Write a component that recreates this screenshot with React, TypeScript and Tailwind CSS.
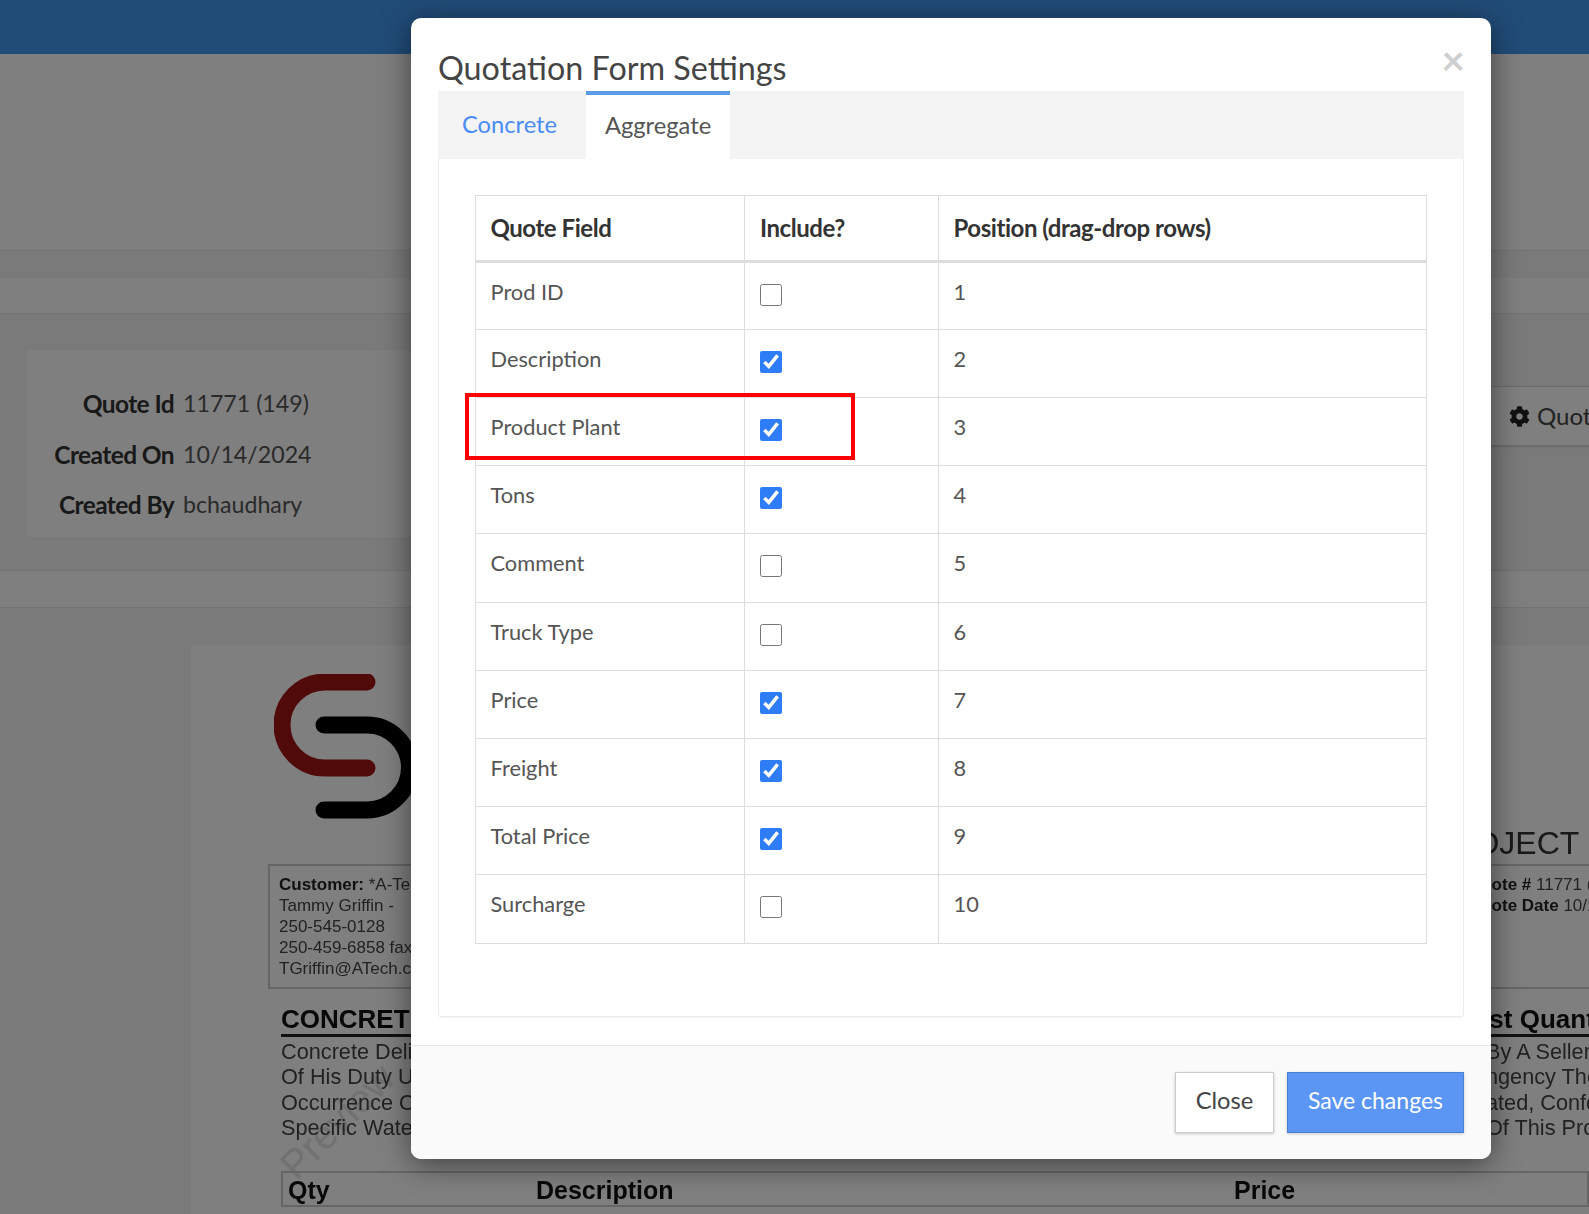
import { FaCog } from 'react-icons/fa';

const FIELDS = [
  { name: 'Prod ID', on: false },
  { name: 'Description', on: true },
  { name: 'Product Plant', on: true },
  { name: 'Tons', on: true },
  { name: 'Comment', on: false },
  { name: 'Truck Type', on: false },
  { name: 'Price', on: true },
  { name: 'Freight', on: true },
  { name: 'Total Price', on: true },
  { name: 'Surcharge', on: false },
];

const META = [
  { label: 'Quote Id', value: '11771 (149)' },
  { label: 'Created On', value: '10/14/2024' },
  { label: 'Created By', value: 'bchaudhary' },
];

function Backdrop() {
  return (
    <div className="min-h-full bg-[#f4f4f4] font-['Lato',sans-serif] text-[#333]">
      <div className="h-[54px] bg-[#4298f0]" />
      <div className="h-[197px] bg-white border-b border-[#e6e6e6]" />
      <div className="h-[27px]" />
      <div className="h-[36px] bg-white border-b border-[#e6e6e6]" />

      {/* Quote info */}
      <div className="h-[256px] pt-[36px] pl-[27px] flex justify-between">
        <div className="w-[500px] h-[187px] bg-white pt-[30px] flex flex-col gap-[3px]">
          {META.map(m => (
            <div key={m.label} className="flex h-[47.5px] leading-[47px]">
              <div className="w-[147px] text-right text-[24.5px] font-bold tracking-[-0.6px]">{m.label}</div>
              <div className="ml-[9px] text-[23.2px] text-[#555]">{m.value}</div>
            </div>
          ))}
        </div>
        <div className="shrink-0 mt-[36px] mr-[-80px] h-[60px] pl-[20px] w-[180px] bg-white border-y border-[#d8d8d8] shadow flex items-center gap-[7px] text-[24px] text-[#444]">
          <FaCog size={21} className="text-[#222]" />
          Quote
        </div>
      </div>
      <div className="h-[38px] bg-white border-y border-[#e6e6e6]" />

      {/* Quote document preview */}
      <div className="ml-[191px] mt-[37px] h-[600px] bg-white relative blur-[0.6px] font-['Liberation_Sans',sans-serif] overflow-hidden">
        <div className="absolute left-[75px] top-[446px] -rotate-45 text-[40px] text-[#e2e2e2]">Preview</div>
        <div className="relative flex justify-between">
          <div className="pl-[77px] w-[500px]">
            <svg width="160" height="146" viewBox="0 0 160 146" className="mt-[29px] ml-[6px]">
              <path d="M93 8H51a43 43 0 0 0 0 86H93" fill="none" stroke="#a01414" strokeWidth="17" strokeLinecap="round" />
              <path d="M50 51H93a42.5 42.5 0 0 1 0 85H50" fill="none" stroke="#000" strokeWidth="17" strokeLinecap="round" />
            </svg>
            <div className="mt-[44px] h-[125px] border-2 border-[#ccc] px-[9px] pt-[8px] text-[17px] leading-[21px] text-[#444] whitespace-nowrap">
              <div><b className="text-[#222]">Customer:</b> *A-Tech</div>
              <div>Tammy Griffin -</div>
              <div>250-545-0128</div>
              <div>250-459-6858 fax</div>
              <div>TGriffin@ATech.com</div>
            </div>
          </div>
          <div className="w-[125px] h-[344px] pt-[180px] shrink-0 whitespace-nowrap border-b-2 border-[#ccc]">
            <div className="text-[32px] leading-[36px] text-[#333] h-[41px] border-b-2 border-[#ccc] -ml-[34px]">PROJECT</div>
            <div className="text-[17px] leading-[21px] text-[#444] mt-[8px] ml-[4px] -mr-[40px]">
              <div><b className="text-[#222]">Quote #</b> 11771 (149)</div>
              <div><b className="text-[#222]">Quote Date</b> 10/14/2024</div>
            </div>
          </div>
        </div>

        <div className="relative ml-[90px] mt-[11px] whitespace-nowrap">
          <div className="flex justify-between h-[37px] border-b-[3px] border-[#222] text-[26px] font-bold leading-[38px] text-[#111]">
            <span>CONCRETE</span>
            <span className="w-[117px] shrink-0">Est Quantity</span>
          </div>
          <div className="flex justify-between text-[21.7px] leading-[25.3px] text-[#444] pt-[2px]">
            <div>
              <div>Concrete Delivered</div>
              <div>Of His Duty Under</div>
              <div>Occurrence Of</div>
              <div>Specific Water</div>
            </div>
            <div className="w-[117px] shrink-0 pl-[14px]">
              <div>By A Seller</div>
              <div>ngency The</div>
              <div>ated, Conform</div>
              <div>Of This Project</div>
            </div>
          </div>
          <div className="mt-[31px] h-[36px] border-2 border-[#ccc] flex text-[25px] font-bold leading-[34px] text-[#111]">
            <span className="w-[253px] pl-[5px]">Qty</span>
            <span className="w-[698px]">Description</span>
            <span>Price</span>
          </div>
        </div>
      </div>
    </div>
  );
}

export default function App() {
  return (
    <div className="relative h-screen overflow-hidden">
      <Backdrop />
      <div className="absolute inset-0 bg-black/50" />

      {/* Modal */}
      <div className="absolute left-[411px] top-[18px] w-[1080px] h-[1141px] bg-white rounded-[10px] shadow-[0_5px_30px_rgba(0,0,0,0.5)] font-['Lato',sans-serif] text-[#555] flex flex-col">
        <div className="relative h-[73px] px-[27px] pt-[27px]">
          <h4 className="text-[32.3px] leading-[45px] font-normal text-[#444] whitespace-nowrap">Quotation Form Settings</h4>
          <span className="absolute right-[26px] top-[17px] text-[41px] leading-[50px] font-bold text-[#cfcfcf]">×</span>
        </div>

        <div className="px-[27px] flex-1">
          {/* Tabs */}
          <div className="h-[68px] bg-[#f4f4f4] flex text-[23.7px]">
            <div className="w-[148px] pl-[24px] pt-[17px] leading-[32px] text-[#4a8cf5]">Concrete</div>
            <div className="w-[144px] bg-white border-t-[4px] border-[#5b9bea] pl-[19px] pt-[14px] leading-[32px] text-[#555]">Aggregate</div>
          </div>

          {/* Tab panel */}
          <div className="h-[858px] border border-t-0 border-[#ececec] rounded-b-[4px] shadow-[0_1px_1px_rgba(0,0,0,0.05)] pt-[36px] px-[36px]">
            <div className="relative">
              <table className="w-[952px] table-fixed border-collapse text-[21.8px] leading-[28px]">
                <colgroup>
                  <col className="w-[269px]" />
                  <col className="w-[194px]" />
                  <col />
                </colgroup>
                <thead>
                  <tr className="h-[66px] text-[24px] text-[#333] tracking-[-0.45px] text-left">
                    <th className="border border-b-[3px] border-[#ddd] px-[14.5px] font-bold">Quote Field</th>
                    <th className="border border-b-[3px] border-[#ddd] px-[15px] font-bold">Include?</th>
                    <th className="border border-b-[3px] border-[#ddd] px-[14.5px] font-bold">Position (drag-drop rows)</th>
                  </tr>
                </thead>
                <tbody>
                  {FIELDS.map((f, i) => (
                    <tr key={f.name} className="h-[68.2px]">
                      <td className="border border-[#ddd] px-[14.5px] pt-[15px] align-top">{f.name}</td>
                      <td className="border border-[#ddd] px-[15px] pt-[21px] align-top">
                        <input type="checkbox" defaultChecked={f.on} className="block w-[22px] h-[22px] m-0 accent-[#2f7df6]" />
                      </td>
                      <td className="border border-[#ddd] px-[14.5px] pt-[15px] align-top">{i + 1}</td>
                    </tr>
                  ))}
                </tbody>
              </table>
              {/* annotation around the Product Plant row */}
              <div className="absolute left-[-10px] top-[198px] w-[390px] h-[67px] border-[4px] border-[#ff0000] pointer-events-none" />
            </div>
          </div>
        </div>

        {/* Footer */}
        <div className="h-[115px] mt-[28px] border-t border-[#e8e8e8] bg-[#fafafa] rounded-b-[10px] px-[27px] pt-[26px] flex justify-end gap-[13px]">
          <button className="w-[99px] h-[61px] pb-[3px] bg-white border border-[#ccc] text-[23.7px] text-[#444] shadow-[0_1px_3px_rgba(0,0,0,0.2)]">Close</button>
          <button className="w-[177px] h-[61px] pb-[3px] bg-[#5b96f5] border border-[#4a80d0] text-[23px] text-white shadow-[0_1px_3px_rgba(0,0,0,0.2)]">Save changes</button>
        </div>
      </div>
    </div>
  );
}
